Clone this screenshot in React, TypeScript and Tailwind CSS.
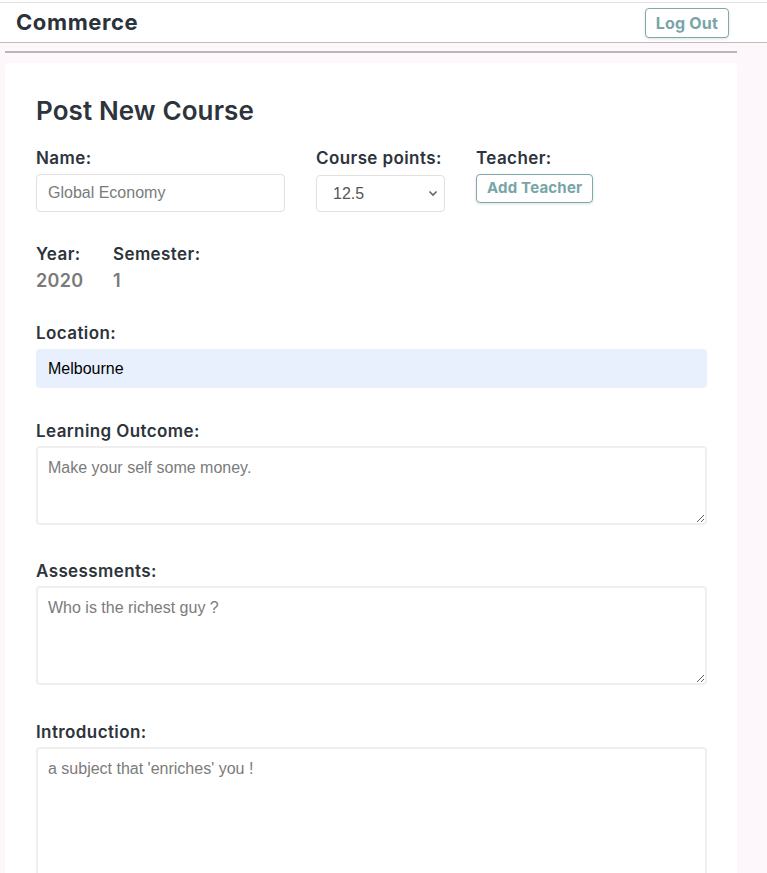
import React from "react";

const labelCls = "block text-[17px] leading-[24px] font-semibold text-[#2d343b] tracking-[0.4px]";

export default function App() {
  return (
    <div className="min-h-screen bg-[#fdf6fb] font-['Inter',sans-serif]">
      <div className="bg-white pt-[2px]">
        <header className="h-[41px] border-t border-b border-t-[#e2e2e2] border-b-[#bdbdbd] flex items-center justify-between pl-[16px] pr-[38px]">
          <span className="text-[22px] font-bold text-[#2b323a] tracking-[0.6px]">Commerce</span>
          <button className="h-[30px] px-[10px] rounded-[4px] border-[1.5px] border-[#7fa8aa] text-[#78a5a8] font-bold text-[16px] tracking-[0.2px] shadow-[0_1px_3px_rgba(0,0,0,0.12)] bg-white">
            Log Out
          </button>
        </header>
      </div>
      <div className="ml-[5px] w-[732px] mt-[8px] h-[2px] bg-[#bbb5bb]" />
      <div className="ml-[5px] w-[732px] mt-[10px] bg-white rounded-[4px] pl-[31px] pr-[30px] pt-[32px] pb-[40px]">
        <h1 className="text-[26px] leading-[31px] font-semibold text-[#2d343b] tracking-[0.1px]">Post New Course</h1>
        <div className="flex mt-[20px]">
          <div className="w-[249px]">
            <label className={labelCls}>Name:</label>
            <input
              placeholder="Global Economy"
              className="mt-[4px] w-full h-[38px] border border-[#e1e1e1] rounded-[4px] px-[11px] text-[16px] font-['Liberation_Sans',sans-serif] placeholder:text-[#7b7b7b] outline-none"
            />
          </div>
          <div className="w-[129px] ml-[31px]">
            <label className={labelCls}>Course points:</label>
            <div className="relative mt-[5px]">
              <select className="appearance-none w-full h-[37px] border border-[#e1e1e1] rounded-[4px] pl-[16px] text-[16px] text-[#555] font-['Liberation_Sans',sans-serif] bg-white outline-none">
                <option>12.5</option>
              </select>
              <svg className="absolute right-[7px] top-[15px] pointer-events-none" width="10" height="7" viewBox="0 0 10 7">
                <path d="M1.5 1.5 L5 5 L8.5 1.5" fill="none" stroke="#666" strokeWidth="1.6" />
              </svg>
            </div>
          </div>
          <div className="ml-[31px]">
            <label className={labelCls}>Teacher:</label>
            <button className="mt-[4px] h-[29px] px-[10px] rounded-[4px] border-[1.5px] border-[#7fa8aa] text-[#78a5a8] font-bold text-[15px] tracking-[0.2px] shadow-[0_1px_3px_rgba(0,0,0,0.12)] bg-white">
              Add Teacher
            </button>
          </div>
        </div>

        <div className="flex mt-[30px]">
          <div className="w-[77px]">
            <div className={labelCls}>Year:</div>
            <div className="mt-[2px] text-[18px] leading-[26px] font-semibold text-[#7a7a7a] tracking-[0.3px]">2020</div>
          </div>
          <div>
            <div className={labelCls}>Semester:</div>
            <div className="mt-[2px] text-[18px] leading-[26px] font-semibold text-[#7a7a7a]">1</div>
          </div>
        </div>

        <div className="mt-[27px]">
          <label className={labelCls}>Location:</label>
          <input
            defaultValue="Melbourne"
            className="mt-[4px] w-full h-[39px] bg-[#e8f0fe] rounded-[4px] px-[12px] text-[16px] text-black font-['Liberation_Sans',sans-serif] outline-none"
          />
        </div>

        <div className="mt-[31px]">
          <label className={labelCls}>Learning Outcome:</label>
          <textarea
            placeholder="Make your self some money."
            className="mt-[3px] block w-full h-[79px] border-2 border-[#efefef] rounded-[4px] px-[10px] py-[8px] text-[16px] font-['Liberation_Sans',sans-serif] placeholder:text-[#7b7b7b] outline-none"
          />
        </div>

        <div className="mt-[34px]">
          <label className={labelCls}>Assessments:</label>
          <textarea
            placeholder="Who is the richest guy ?"
            className="mt-[3px] block w-full h-[99px] border-2 border-[#efefef] rounded-[4px] px-[10px] py-[8px] text-[16px] font-['Liberation_Sans',sans-serif] placeholder:text-[#7b7b7b] outline-none"
          />
        </div>

        <div className="mt-[35px]">
          <label className={labelCls}>Introduction:</label>
          <textarea
            placeholder="a subject that 'enriches' you !"
            className="mt-[3px] block w-full h-[160px] border-2 border-[#efefef] rounded-[4px] px-[10px] py-[8px] text-[16px] font-['Liberation_Sans',sans-serif] placeholder:text-[#7b7b7b] outline-none"
          />
        </div>
      </div>
    </div>
  );
}
